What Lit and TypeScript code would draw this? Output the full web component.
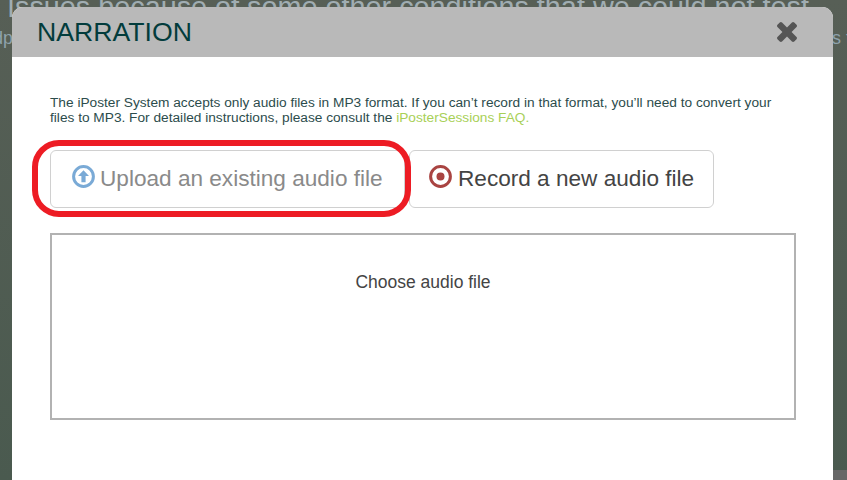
import { LitElement, html, css } from "lit";
import { customElement } from "lit/decorators.js";

@customElement("app-root")
export class AppRoot extends LitElement {
  static styles = css`
    :host { display: block; width: 847px; height: 480px; overflow: hidden; position: relative; font-family: "Liberation Sans", Arial, sans-serif; background: linear-gradient(#575f56, #4a5a4f); }
    .bg-line1 { position: absolute; left: 7px; top: -8px; font-size: 28.8px; line-height: 30px; color: #a0adb2; white-space: nowrap; }
    .bg-line2 { position: absolute; left: -7px; top: 28px; font-size: 18px; line-height: 20px; color: #8ea2ab; white-space: nowrap; display: flex; }
    .bg-line2 .start { width: 839px; }
    .corner { position: absolute; left: 833px; right: 0; top: 470px; bottom: 0; background: #676767; }
    .modal { position: absolute; left: 12px; top: 7px; width: 821px; height: 473px; background: #fff; border-radius: 11px 11px 0 0; overflow: hidden; }
    .head { height: 50px; background: #b9b9b9; display: flex; align-items: center; justify-content: space-between; padding: 0 36px 0 25px; box-sizing: border-box; }
    h1 { margin: 0; font-weight: 400; font-size: 26.65px; color: #023c3c; line-height: 50px; }
    .close { width: 20px; height: 20px; display: block; fill: #555; }
    .body { padding: 39px 37px 0 38px; }
    p { margin: 0 0 25px; font-size: 13.7px; line-height: 14.5px; color: #2c4c4c; width: 740px; }
    a { color: #a8d057; text-decoration: none; }
    .tabs { display: flex; gap: 4px; }
    .tab { height: 58px; box-sizing: border-box; border: 1px solid #d0d0d0; border-radius: 6px; background: #fff; display: flex; align-items: center; font-size: 22.6px; color: #444; }
    .tab svg { width: 23px; height: 23px; display: block; margin-top: -5px; }
    .upload { width: 355px; padding-left: 21px; gap: 5px; color: #8a8a8a; }
    .record { width: 305px; padding-left: 19px; gap: 6px; }
    .panel { margin-top: 25px; width: 746px; height: 187px; box-sizing: border-box; border: 2px solid #b2b2b2; text-align: center; font-size: 17.5px; line-height: 20px; color: #444; padding-top: 37px; }
    .mark { position: absolute; left: 32px; top: 140px; width: 379px; height: 77px; box-sizing: border-box; border: 6px solid #ed1c24; border-radius: 27px; }
  `;

  render() {
    return html`
      <div class="bg-line1">Issues because of some other conditions that we could not test</div>
      <div class="bg-line2"><span class="start">dp</span><span>s t</span></div>
      <div class="corner"></div>
      <div class="modal">
        <div class="head">
          <h1>NARRATION</h1>
          <svg class="close" viewBox="302 366 1188 1188"><path d="M1490 1322q0 40-28 68l-136 136q-28 28-68 28t-68-28l-294-294-294 294q-28 28-68 28t-68-28l-136-136q-28-28-28-68t28-68l294-294-294-294q-28-28-28-68t28-68l136-136q28-28 68-28t68 28l294 294 294-294q28-28 68-28t68 28l136 136q28 28 28 68t-28 68l-294 294 294 294q28 28 28 68z"/></svg>
        </div>
        <div class="body">
          <p>The iPoster System accepts only audio files in MP3 format. If you can’t record in that format, you’ll need to convert your files to MP3. For detailed instructions, please consult the <a href="#">iPosterSessions FAQ.</a></p>
          <div class="tabs">
            <div class="tab upload">
              <svg viewBox="0 0 23 23"><circle cx="11.5" cy="11.5" r="9.9" fill="none" stroke="#7aaad6" stroke-width="3"/><path d="M11.5 5.2 17 11h-3.4v6.2H9.4V11H6z" fill="#7aaad6"/></svg>
              <span>Upload an existing audio file</span>
            </div>
            <div class="tab record">
              <svg viewBox="0 0 23 23"><circle cx="11.5" cy="11.5" r="9.9" fill="none" stroke="#a94442" stroke-width="3"/><circle cx="11.5" cy="11.5" r="4" fill="#a94442"/></svg>
              <span>Record a new audio file</span>
            </div>
          </div>
          <div class="panel">Choose audio file</div>
        </div>
      </div>
      <div class="mark"></div>
    `;
  }
}
